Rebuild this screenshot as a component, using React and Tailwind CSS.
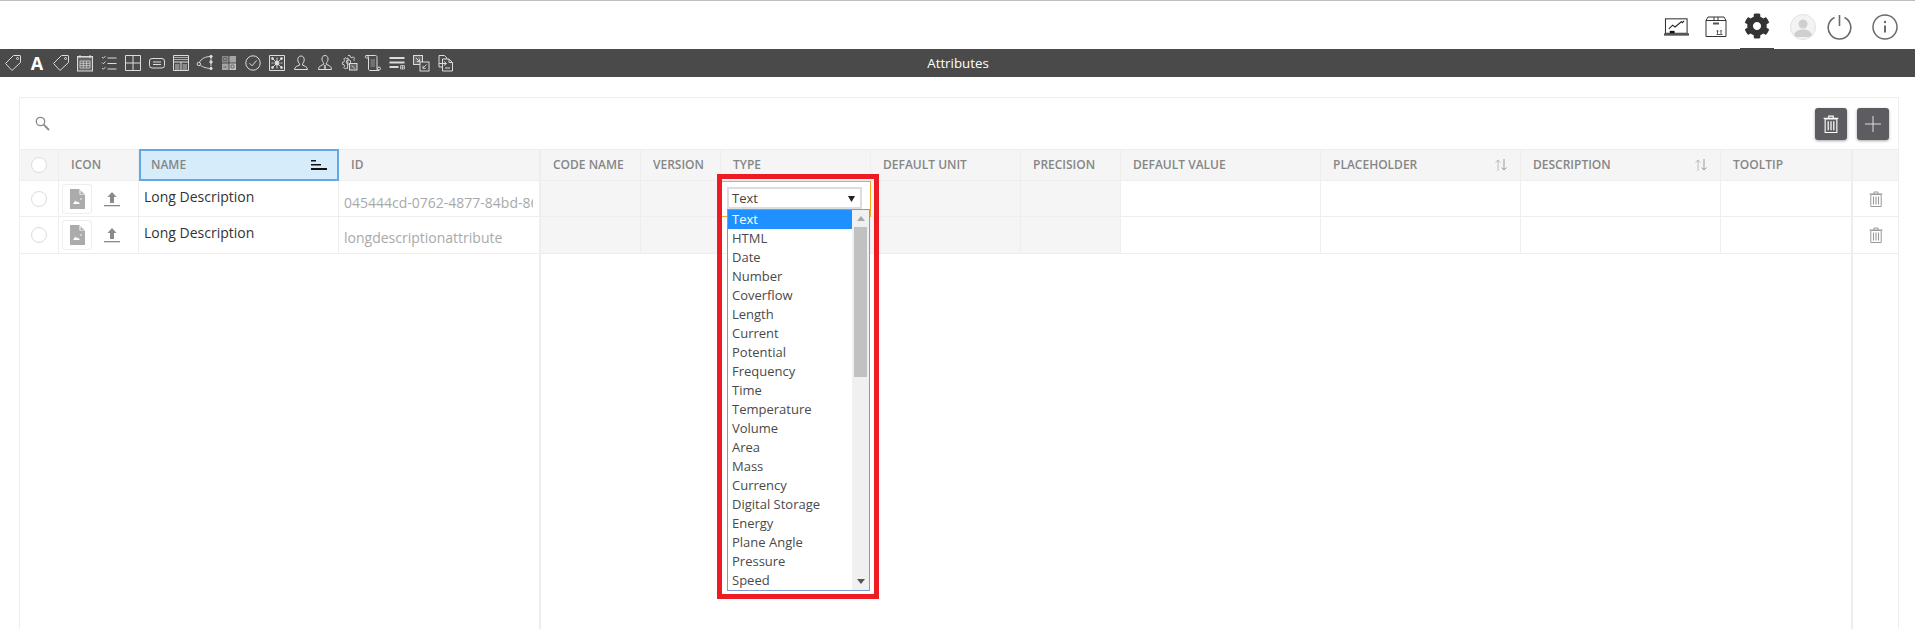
import React from "react";
import { FaCog } from "react-icons/fa";

const GRID = "grid grid-cols-[39px_80px_200px_202px_100px_80px_150px_150px_100px_200px_200px_200px_132px_45px]";

const TYPES = ["Text","HTML","Date","Number","Coverflow","Length","Current","Potential","Frequency","Time","Temperature","Volume","Area","Mass","Currency","Digital Storage","Energy","Plane Angle","Pressure","Speed"];

function TI({ children }) {
  return (
    <div className="w-6 h-[18px] flex items-center justify-center shrink-0">
      <svg width="18" height="18" viewBox="0 0 18 18" fill="none" stroke="#dcdcdc" strokeWidth="1">{children}</svg>
    </div>
  );
}

const Tag = () => (
  <TI>
    <path d="M9.5 1.5h6.5a.5.5 0 0 1 .5.5v6.5L8 16.5 1.5 9.5z" />
    <circle cx="13.5" cy="4.5" r="1" />
  </TI>
);

function Toolbar() {
  return (
    <div className="flex items-center pl-px">
      <Tag />
      <div className="w-6 h-[18px] flex items-center justify-center shrink-0 text-white font-bold text-[18px] leading-[18px]">A</div>
      <Tag />
      <TI>
        <rect x="1.5" y="3" width="15" height="14" fill="#666" />
        <path d="M1 2.5h16M4 1v3M14 1v3" />
        <path d="M4 7h10v7H4zM4 9.3h10M4 11.6h10M7.3 7v7M10.6 7v7" stroke="#ddd" strokeWidth=".7" />
      </TI>
      <TI>
        <path d="M2 3l1.3 1.3L5.5 2M2 8.5l1.3 1.3L5.5 7.5M2 14l1.3 1.3 2.2-2.3" strokeWidth=".9" />
        <path d="M7.5 4h9M7.5 9.5h9M7.5 15h9" strokeWidth="1.2" />
      </TI>
      <TI><path d="M1.5 1.5h15v15h-15zM1.5 9h15M9 1.5v15" /></TI>
      <TI>
        <rect x="1.5" y="4.5" width="15" height="9.5" rx="2.5" />
        <path d="M5 8h8M5 10.5h8" />
      </TI>
      <TI>
        <path d="M1.5 1.5h15v15h-15z" />
        <path d="M2 3.5h14M2 5.5h14" strokeWidth="1.2" stroke="#aaa" />
        <path d="M1.5 8h15M9 8v8.5" />
        <rect x="3" y="10" width="4.5" height="6" fill="#888" stroke="none" />
        <rect x="10.5" y="10" width="4.5" height="6" fill="#888" stroke="none" />
      </TI>
      <TI>
        <path d="M3.5 8.2C5 5 8.5 3 13 2.5M13 2.5C14.5 2.5 15 3 15 4v3M4.5 11.5c3 2 6 2.5 9 3M15 9v3.5" strokeWidth=".9" />
        <circle cx="2.8" cy="10" r="1.7" />
        <circle cx="15" cy="2.5" r="1.2" fill="#dcdcdc" />
        <circle cx="15" cy="8" r="1.2" fill="#dcdcdc" />
        <circle cx="15" cy="14.5" r="1.2" fill="#dcdcdc" />
      </TI>
      <TI>
        <rect x="2" y="2" width="6.5" height="6.5" fill="#8a8a8a" stroke="none" />
        <rect x="9.5" y="2" width="6.5" height="6.5" fill="#a5a5a5" stroke="none" />
        <rect x="2" y="9.5" width="6.5" height="6.5" fill="#a5a5a5" stroke="none" />
        <rect x="9.5" y="9.5" width="6.5" height="6.5" fill="#c5c5c5" stroke="none" />
        <path d="M3.5 3.5h3v3h-3zM11 11h3v3h-3zM3.5 13h3" stroke="#666" />
      </TI>
      <TI>
        <circle cx="9" cy="9" r="7.2" />
        <path d="M5.5 9.2l2.5 2.6 4.6-5.3" />
      </TI>
      <TI>
        <path d="M1.5 1.5h15v15h-15z" />
        <circle cx="9" cy="9" r="2" fill="#dcdcdc" />
        <path d="M9 3.5V14.5M4 4l10 10M14 4L4 14M3.5 9h2M12.5 9h2" strokeWidth=".9" />
        <circle cx="4.5" cy="4.5" r="1" fill="#dcdcdc" /><circle cx="13.5" cy="4.5" r="1" fill="#dcdcdc" />
        <circle cx="4.5" cy="13.5" r="1" fill="#dcdcdc" /><circle cx="13.5" cy="13.5" r="1" fill="#dcdcdc" />
      </TI>
      <TI>
        <path d="M9 2c2 0 3.2 1.5 3.2 3.7 0 1.8-.9 3.3-1.7 4.1v1.4c2 .7 5 1.5 5 4.3H2.5c0-2.8 3-3.6 5-4.3V9.8C6.7 9 5.8 7.5 5.8 5.7 5.8 3.5 7 2 9 2z" />
      </TI>
      <TI>
        <path d="M9 1.5c2 0 3 1.5 3 3.5s-.9 3-1.6 3.8v1.7c2 .7 5.1 1.5 5.1 5H2.5c0-3.5 3.1-4.3 5.1-5V8.8C6.9 8 6 7 6 5s1-3.500 3-3.500z" />
        <path d="M9 11v5" strokeWidth="1.5" />
      </TI>
      <TI>
        <path d="M8 1.500h2l.4 1.600 1.500.6 1.400-.8 1.300 1.300-.8 1.400.5 1.200M7.500 14.500l-1-.4-1.400.8-1.300-1.300.8-1.400-.6-1.500-1.600-.4v-2l1.600-.4.6-1.500-.8-1.400 1.300-1.300 1.400.8 1.500-.6z" strokeWidth=".9" />
        <circle cx="8.5" cy="8" r="2.2" strokeWidth=".9" />
        <rect x="9.5" y="9.5" width="7.5" height="6.5" fill="#666" />
        <path d="M11.5 11.5l3.500 3" strokeWidth=".8" />
      </TI>
      <TI>
        <path d="M2 1.500h9.500c1.500 0 1.500 1.500 1.500 3v10.500c0 1 1 1.500 2 1.500H6c-1 0-1.500-.7-1.500-1.500V3.500C4.500 2.500 4 1.500 2 1.500zM2 1.500C1 1.500 1 4 2.500 4h2" />
        <path d="M6.500 6h4.500M6.500 8h4.500M6.500 10h4.500M6.500 12h4.500" strokeWidth="1" stroke="#999" />
        <circle cx="15" cy="14.5" r="1.5" />
      </TI>
      <TI>
        <path d="M1.500 4h15M1.500 8.500h15" strokeWidth="2" />
        <path d="M1.500 13h9" strokeWidth="2" />
        <path d="M12.500 11.500h4v3.500h-4zM14.500 11.500V15M12.500 13.200h4" strokeWidth=".7" />
      </TI>
      <TI>
        <rect x="1.5" y="1.5" width="9" height="9" fill="#6a6a6a" />
        <rect x="8" y="8" width="9" height="9" fill="#4a4a4a" />
        <path d="M3.800 3.800l3.400 3.400M7.500 4.800v2.700H4.800M14.500 10.500l-3.500 3.700M11 11.700v2.700h2.700" strokeWidth=".9" />
      </TI>
      <TI>
        <path d="M3 1.500h5.500l2 2V7M3 1.500V13h3.500" />
        <path d="M8 5h5l3.500 3.500V17H6.500V5z" fill="#4a4a4a" />
        <path d="M13 5v3.500h3.500" />
        <path d="M3 9.500h7M8 7.500l2.500 2-2.500 2M9 14h5" strokeWidth="1" />
      </TI>
    </div>
  );
}

function TopIcons() {
  return (
    <div className="flex items-start justify-end h-[48px] pr-[17px]">
      <svg className="mt-[17px] mr-[16px]" width="25" height="19" viewBox="0 0 26 19" fill="none" stroke="#222">
        <rect x="1.500" y=".5" width="22.500" height="15" />
        <path d="M5 11l4-4 2.500 2L18 3.500l1 1 2-2" strokeWidth="1.100" />
        <rect x="6" y="13" width="5" height="3" fill="#111" stroke="none" />
        <rect x="0" y="15.500" width="26" height="2.500" fill="#555" stroke="none" />
      </svg>
      <svg className="mt-[15px] mr-[13px]" width="22" height="21" viewBox="0 0 22 21" fill="none" stroke="#333">
        <path d="M1 4.500L3 1h16l2 3.500V20.500H1zM1 4.500h20M9 1v3.500M13 1v3.500" />
        <rect x="8" y="6.500" width="6" height="2" fill="#555" stroke="none" />
        <path d="M12.500 14.500v3.500M16 14.500v3.500M11.500 18.500h6M11.700 15.300l.8-1 .8 1M15.200 15.300l.8-1 .8 1" strokeWidth=".8" />
      </svg>
      <div className="w-[34px] h-[49px] border-b-2 border-[#444] flex justify-center pt-[12px] mr-[16px]">
        <FaCog className="text-[#333] w-[26px] h-[26px]" />
      </div>
      <svg className="mt-[13px] mr-[11px]" width="26" height="26" viewBox="0 0 26 26">
        <defs><clipPath id="av"><circle cx="13" cy="13" r="12" /></clipPath></defs>
        <circle cx="13" cy="13" r="12.500" fill="#f3f3f3" stroke="#e2e2e2" />
        <g clipPath="url(#av)" fill="#cfcfcf">
          <circle cx="13" cy="10" r="4.500" />
          <path d="M4 22c0-4 4-6.500 9-6.500s9 2.500 9 6.500v1H4z" />
        </g>
      </svg>
      <svg className="mt-[13px] mr-[20px]" width="25" height="26" viewBox="0 0 25 26" fill="none" stroke="#6a6a6a" strokeWidth="1.600">
        <path d="M7.500 3.500a11.300 11.300 0 1 0 10 0" />
        <path d="M12.500 1v11" />
      </svg>
      <svg className="mt-[13px]" width="26" height="26" viewBox="0 0 26 26" fill="none" stroke="#6a6a6a" strokeWidth="1.500">
        <circle cx="13" cy="13" r="12" />
        <path d="M13 11.500v7" strokeWidth="2" />
        <circle cx="13" cy="8" r="1.200" fill="#6a6a6a" stroke="none" />
      </svg>
    </div>
  );
}

function Trash({ color, w = 14, h = 16 }) {
  return (
    <svg width={w} height={h} viewBox="0 0 14 16" fill="none" stroke={color} strokeWidth="1">
      <path d="M.5 3h13M5 3V1h4v2" />
      <path d="M1.800 3.500h10.400v12H1.800z" />
      <path d="M4.500 5.500v8M7 5.500v8M9.500 5.500v8" strokeWidth="1.100" />
    </svg>
  );
}

function SortBoth() {
  return (
    <svg className="mr-[12px] shrink-0" width="14" height="12" viewBox="0 0 14 12" fill="none" stroke="#bbb" strokeWidth="1">
      <path d="M4 12V1M1.500 3.500L4 1l2.500 2.500" />
      <path d="M10 0v11M7.500 8.500L10 11l2.500-2.500" stroke="#999" />
    </svg>
  );
}

function Circle() {
  return <div className="w-[16px] h-[16px] rounded-full border border-[#ddd] bg-white" />;
}

function Head({ label, sort }) {
  return (
    <div className="h-full pl-[12px] flex items-center justify-between text-[12px] font-semibold text-[#868686] whitespace-nowrap border-r border-[#eee]">
      <span>{label}</span>
      {sort && <SortBoth />}
    </div>
  );
}

function IconCell() {
  return (
    <div className="pl-[3px] pt-[3px] flex items-start border-r border-[#eee]">
      <div className="w-[30px] h-[30px] rounded-[3px] border border-[#eee] flex items-center justify-center">
        <svg width="15" height="20" viewBox="0 0 15 20">
          <path d="M0 0h9.500L15 5.500V20H0z" fill="#ababab" />
          <path d="M9.500 0v5.500H15z" fill="#fff" />
          <path d="M10.500 1.500L14 5h-3.500z" fill="#ababab" />
          <path d="M3 15l2.500-3.500 1.500 2 1-1 2 2.500z" fill="#fff" />
          <circle cx="11" cy="10" r=".8" fill="#fff" />
        </svg>
      </div>
      <svg className="ml-[12px] mt-[8px]" width="16" height="15" viewBox="0 0 16 15" fill="#8a8a8a">
        <path d="M8 0l4.500 5H10v6H6V5H3.500z" />
        <rect x="0" y="13" width="16" height="1.300" />
      </svg>
    </div>
  );
}

function Row({ id, idPad, first, h }) {
  const gray = "bg-[#f5f5f5] border-r border-[#eee]";
  const white = "border-r border-[#eee]";
  return (
    <div className={`${GRID} ${h} border-b border-[#eee] text-[14px]`}>
      <div className="flex items-center justify-center border-r border-[#eee]"><Circle /></div>
      <IconCell />
      <div className="pl-[5px] pt-[6px] leading-[20px] text-[#333] border-r border-[#eee]">Long Description</div>
      <div className={`pl-[5px] pr-[6px] ${idPad} leading-[20px] text-[#a9a9a9] border-r-2 border-[#eee]`}>
        <div className="overflow-hidden whitespace-nowrap">{id}</div>
      </div>
      <div className={gray} />
      <div className={gray} />
      {first ? (
        <div className="relative border border-[#f5a81c] pl-[5px] pt-[5px] -mb-px z-10 bg-white">
          <div className="w-[135px] h-[22px] border-2 border-[#ddd] bg-white flex items-center justify-between pl-[3px] pr-[5px] pt-[1px] text-[13px] text-[#444]">
            <span>Text</span>
            <svg width="7" height="6" viewBox="0 0 7 6"><path d="M0 0h7L3.500 6z" fill="#222" /></svg>
          </div>
          <div className="absolute left-[5px] top-[27px] w-[143px] h-[382px] border border-[#7f9bd0] bg-white flex text-[13px] leading-[19px] text-[#4a4a4a]">
            <div className="w-[124px]">
              {TYPES.map((t, i) => (
                <div key={t} className={`h-[19px] pl-[4px] ${i === 0 ? "bg-[#1e90ff] text-white" : ""}`}>{t}</div>
              ))}
            </div>
            <div className="flex-1 bg-[#f0f0f0] flex flex-col items-center">
              <div className="h-[17px] flex items-center justify-center">
                <svg width="8" height="5" viewBox="0 0 8 5"><path d="M4 0l4 5H0z" fill="#a8a8a8" /></svg>
              </div>
              <div className="w-[13px] h-[150px] bg-[#c1c1c1]" />
              <div className="flex-1" />
              <div className="h-[17px] flex items-center justify-center">
                <svg width="8" height="5" viewBox="0 0 8 5"><path d="M0 0h8L4 5z" fill="#555" /></svg>
              </div>
            </div>
          </div>
          <div className="absolute left-[-5px] top-[-8px] w-[162px] h-[425px] border-[5px] border-[#ed1c24]" />
        </div>
      ) : (
        <div className={white} />
      )}
      <div className={gray} />
      <div className={gray} />
      <div className={white} />
      <div className={white} />
      <div className={white} />
      <div className="border-r-2 border-[#eee]" />
      <div className="flex items-center justify-center pl-[1px]"><Trash color="#9a9a9a" /></div>
    </div>
  );
}

export default function App() {
  return (
    <div className="h-[629px] overflow-hidden flex flex-col bg-white font-['Open_Sans',sans-serif]">
      <div className="h-[49px] border-t border-[#bdbdbd]">
        <TopIcons />
      </div>
      <div className="h-[28px] bg-[#4a4a4a] grid grid-cols-[1fr_auto_1fr] items-center">
        <Toolbar />
        <div className="text-white text-[13.3px] leading-[28px] pl-[1px]">Attributes</div>
        <div />
      </div>
      <div className="flex-1 min-h-0 mt-[20px] ml-[19px] mr-[16px] border-x border-t border-[#eee] flex flex-col">
        <div className="h-[51px] shrink-0 flex items-center justify-between pl-[15px] pr-[9px]">
          <svg width="15" height="15" viewBox="0 0 15 15" fill="none" stroke="#8a8a8a" strokeWidth="1.300">
            <circle cx="5.500" cy="5.500" r="4.200" />
            <path d="M8.700 8.700L14 14" strokeWidth="1.800" />
          </svg>
          <div className="flex gap-[10px]">
            <button className="w-[32px] h-[32px] rounded-[3px] bg-[#5d5d61] shadow-[0_1px_3px_rgba(0,0,0,0.35)] flex items-center justify-center">
              <Trash color="#fff" w={16} h={18} />
            </button>
            <button className="w-[32px] h-[32px] rounded-[3px] bg-[#5d5d61] shadow-[0_1px_3px_rgba(0,0,0,0.35)] flex items-center justify-center">
              <svg width="16" height="16" viewBox="0 0 16 16" stroke="#ddd" strokeWidth="1"><path d="M8 0v16M0 8h16" /></svg>
            </button>
          </div>
        </div>
        <div className={`${GRID} h-[32px] shrink-0 bg-[#f5f5f5] border-y border-[#eee]`}>
          <div className="flex items-center justify-center border-r border-[#eee]"><Circle /></div>
          <Head label="ICON" />
          <div className="-my-px h-[32px] pl-[10px] pr-[10px] flex items-center justify-between bg-[#d6ecfb] border-2 border-[#62a8e5] text-[12px] font-semibold text-[#868686]">
            <span>NAME</span>
            <svg width="16" height="10" viewBox="0 0 16 10" fill="#111"><rect x="0" y="0" width="5" height="1.500" /><rect x="0" y="4" width="10" height="1.500" /><rect x="0" y="8" width="16" height="2" /></svg>
          </div>
          <div className="h-full pl-[12px] flex items-center text-[12px] font-semibold text-[#868686] border-r-2 border-[#eee]">ID</div>
          <Head label="CODE NAME" />
          <Head label="VERSION" />
          <Head label="TYPE" />
          <Head label="DEFAULT UNIT" />
          <Head label="PRECISION" />
          <Head label="DEFAULT VALUE" />
          <Head label="PLACEHOLDER" sort />
          <Head label="DESCRIPTION" sort />
          <div className="h-full pl-[12px] flex items-center text-[12px] font-semibold text-[#868686] border-r-2 border-[#eee]">TOOLTIP</div>
          <div />
        </div>
        <Row first h="h-[36px]" idPad="pt-[12px]" id="045444cd-0762-4877-84bd-86c3f0a1b2d7" />
        <Row h="h-[37px]" idPad="pt-[11px]" id="longdescriptionattribute" />
        <div className="flex-1 grid grid-cols-[521px_1312px_45px]">
          <div className="border-r-2 border-[#eee]" />
          <div className="border-r-2 border-[#eee]" />
          <div />
        </div>
      </div>
    </div>
  );
}
